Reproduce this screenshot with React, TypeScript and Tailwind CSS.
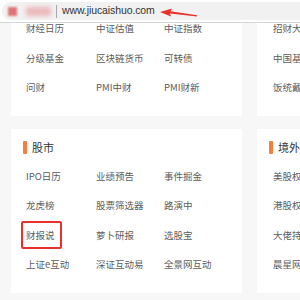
const topRows = [
  ["财经日历", "中证估值", "中证指数"],
  ["分级基金", "区块链货币", "可转债"],
  ["问财", "PMI中财", "PMI财新"],
];
const topRight = ["招财大牛猫", "中国基金报", "饭统戴老板"];

const stockRows = [
  ["IPO日历", "业绩预告", "事件掘金"],
  ["龙虎榜", "股票筛选器", "路演中"],
  ["财报说", "萝卜研报", "选股宝"],
  ["上证e互动", "深证互动易", "全景网互动"],
];
const abroad = ["美股权重", "港股权重", "大佬持仓", "晨星网"];

const font = { fontFamily: '"Noto Sans CJK SC", "Liberation Sans", sans-serif' };

function Cell({ label, marked }: { label: string; marked?: boolean }) {
  return (
    <div className="relative flex h-[29.5px] items-center whitespace-nowrap text-[9.5px] text-[#5c5c5c]">
      {label}
      {marked && (
        <span className="absolute left-[-5px] top-[1px] h-[28px] w-[41px] rounded-[2px] border-2 border-[#e8312a]" />
      )}
    </div>
  );
}

function TopCell({ label }: { label: string }) {
  return <div className="h-[11px] whitespace-nowrap text-[9.5px] leading-[11px] text-[#5c5c5c]">{label}</div>;
}

function Title({ text }: { text: string }) {
  return (
    <div className="flex h-[13px] items-center gap-[5px]">
      <span className="h-[13px] w-[4px] rounded-[1px] bg-[#f5803e]" />
      <span className="text-[11px] leading-none text-[#333]">{text}</span>
    </div>
  );
}

export default function App() {
  return (
    <div className="flex h-[300px] w-[300px] flex-col overflow-hidden bg-[#f7f7f7]" style={font}>
      {/* browser address bar */}
      <div className="relative z-10 h-[23px] shrink-0 border-b border-[#d4d4d4] bg-white pl-[2px] pt-[2px]">
        <div className="flex h-[18px] items-center rounded-l-full bg-[#f1f1f1] pl-[6px]">
          <span className="h-[9px] w-[9px] bg-[#e07474] blur-[1px]" />
          <span className="ml-[9px] h-[9px] w-[25px] bg-[#ecb8bb] blur-[2px]" />
          <span className="ml-[5px] h-[13px] w-px bg-[#a8a8a8]" />
          <span
            className="ml-[5px] text-[10.5px] tracking-[-0.1px] text-[#333]"
            style={{ fontFamily: '"Liberation Sans", sans-serif' }}
          >
            www.jiucaishuo.com
          </span>
        </div>
        <svg className="absolute left-[158px] top-[6px]" width="42" height="14" viewBox="0 0 42 14">
          <path d="M2 6 L14 2.5 L12.5 5.2 L39 9.2 L39 10.6 L12 7.6 L13 10.5 Z" fill="#e8312a" />
        </svg>
      </div>

      <div className="flex min-h-0 flex-1 gap-[15px] pl-[11px]">
        <div className="flex w-[231px] shrink-0 flex-col gap-[13px]">
          <div className="flex flex-col gap-[18.5px] bg-white pb-[23px] pl-[15px]">
            {topRows.map((r) => (
              <div key={r[0]} className="grid grid-cols-[70px_68px_1fr]">
                {r.map((c) => (
                  <TopCell key={c} label={c} />
                ))}
              </div>
            ))}
          </div>
          <div className="bg-white pb-[14px] pl-[12px] pt-[12px]">
            <Title text="股市" />
            <div className="mt-[7px] pl-[3px]">
              {stockRows.map((r) => (
                <div key={r[0]} className="grid grid-cols-[70px_68px_1fr]">
                  {r.map((c) => (
                    <Cell key={c} label={c} marked={c === "财报说"} />
                  ))}
                </div>
              ))}
            </div>
          </div>
        </div>

        <div className="flex w-[60px] shrink-0 flex-col gap-[13px]">
          <div className="flex flex-col gap-[18.5px] bg-white pb-[23px] pl-[16px]">
            {topRight.map((c) => (
              <TopCell key={c} label={c} />
            ))}
          </div>
          <div className="bg-white pb-[14px] pl-[12px] pt-[12px]">
            <Title text="境外" />
            <div className="mt-[7px] pl-[4px]">
              {abroad.map((c) => (
                <Cell key={c} label={c} />
              ))}
            </div>
          </div>
        </div>
      </div>
    </div>
  );
}
